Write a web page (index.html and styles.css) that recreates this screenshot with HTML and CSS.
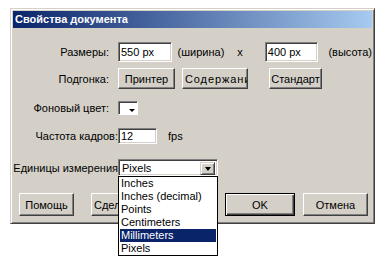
FILE: index.html
```html
<!DOCTYPE html>
<html>
	<head>
		<meta charset="UTF-8">
		<title>Свойства документа</title>
		<link rel="stylesheet" href="styles.css">
	</head>
	<body>
		<div class="dialog">
			<div class="caption">Свойства документа</div>

			<div class="row r-size">
				<div class="lbl">Размеры:</div>
				<div class="field w57">550 px</div>
				<span class="txt m6">(ширина)</span>
				<span class="txt m13">x</span>
				<div class="field w57 m22">400 px</div>
				<span class="txt m10">(высота)</span>
			</div>

			<div class="row r-fit">
				<div class="lbl">Подгонка:</div>
				<div class="btn w57">Принтер</div>
				<div class="btn clip w66 m7"><span class="spaced">Содержание</span></div>
				<div class="btn w53 m21">Стандарт</div>
			</div>

			<div class="row r-bg">
				<div class="lbl">Фоновый цвет:</div>
				<div class="swatch"><i></i></div>
			</div>

			<div class="row r-fps">
				<div class="lbl tight">Частота кадров:</div>
				<div class="field w39">12</div>
				<span class="txt m11">fps</span>
			</div>

			<div class="row r-units">
				<div class="lbl tight">Единицы измерения</div>
				<div class="combo">
					<div class="combo-val">Pixels</div>
					<div class="combo-arrow"><i></i></div>
				</div>
			</div>

			<div class="row r-buttons">
				<div class="btn w55 m6">Помощь</div>
				<div class="btn clip w70 m17"><span>Сделать по умолчанию</span></div>
				<div class="btn def w70 m64">OK</div>
				<div class="btn w65 m8">Отмена</div>
			</div>
		</div>

		<ul class="list">
			<li>Inches</li>
			<li>Inches (decimal)</li>
			<li>Points</li>
			<li>Centimeters</li>
			<li class="sel">Millimeters</li>
			<li>Pixels</li>
		</ul>
	</body>
</html>
```

FILE: styles.css
```css
*{
	margin: 0;
	padding: 0;
	box-sizing: border-box;
}
html, body{
	height: 100%;
}
body{
	position: relative;
	background: #fff;
	font-family: "Liberation Sans", Arial, sans-serif;
	font-size: 11px;
	color: #000;
}
.dialog{
	width: 365px;
	height: 216px;
	margin: 0 0 0 10px;
	position: relative;
	top: 8px;
	background: #d4d0c8;
	border: 1px solid;
	border-color: #d4d0c8 #404040 #404040 #d4d0c8;
	box-shadow: inset 1px 1px #fff, inset -1px -1px #808080;
	padding: 2px;
}
.caption{
	height: 17px;
	line-height: 17px;
	padding-left: 2px;
	font-weight: bold;
	color: #fff;
	background: linear-gradient(to right, #0a246a, #a6caf0);
}
.row{
	display: flex;
	align-items: center;
}
.r-size{ margin-top: 14px; height: 20px; }
.r-fit{ margin-top: 6px; height: 21px; }
.r-bg{ margin-top: 12px; height: 14px; }
.r-fps{ margin-top: 13px; height: 16px; }
.r-units{ margin-top: 15px; height: 17px; }
.r-buttons{ margin-top: 17px; height: 23px; }

.lbl{
	flex: none;
	width: 105px;
	display: flex;
	justify-content: flex-end;
	padding-right: 9px;
	white-space: nowrap;
}
.lbl.tight{
	padding-right: 0;
}
.txt{ white-space: nowrap; }

.field{
	height: 100%;
	background: #fff;
	border: 1px solid;
	border-color: #808080 #fff #fff #808080;
	box-shadow: inset 1px 1px #404040, inset -1px -1px #d4d0c8;
	padding: 0 2px;
	display: flex;
	align-items: center;
}
.btn{
	flex: none;
	height: 100%;
	background: #d4d0c8;
	border: 1px solid;
	border-color: #fff #404040 #404040 #fff;
	box-shadow: inset -1px -1px #808080, inset 1px 1px #d4d0c8;
	display: flex;
	align-items: center;
	justify-content: center;
	white-space: nowrap;
	overflow: hidden;
}
/* текст не влезает — обрезается справа */
.btn.clip{
	justify-content: flex-start;
	padding-left: 2px;
}
.btn.clip span{
	flex: none;
}
.spaced{
	letter-spacing: 0.9px;
}
.btn.def{
	border: 1px solid #000;
	box-shadow: inset 1px 1px #fff, inset -1px -1px #404040, inset -2px -2px #808080;
}

.w39{ width: 39px; }
.w53{ width: 53px; }
.w55{ width: 55px; }
.w57{ width: 57px; }
.w65{ width: 65px; }
.w66{ width: 66px; }
.w70{ width: 70px; }
.m6{ margin-left: 6px; }
.m7{ margin-left: 7px; }
.m8{ margin-left: 8px; }
.m10{ margin-left: 10px; }
.m11{ margin-left: 11px; }
.m13{ margin-left: 13px; }
.m17{ margin-left: 17px; }
.m21{ margin-left: 21px; }
.m22{ margin-left: 22px; }
.m64{ margin-left: 64px; }

.swatch{
	position: relative;
	width: 20px;
	height: 14px;
	background: #fff;
	border: 1px solid;
	border-color: #808080 #fff #fff #808080;
	box-shadow: inset 1px 1px #404040;
}
.swatch i{
	position: absolute;
	right: 2px;
	bottom: 2px;
	border-left: 3px solid transparent;
	border-right: 3px solid transparent;
	border-top: 3px solid #000;
}

.combo{
	width: 100px;
	height: 100%;
	background: #fff;
	border: 1px solid;
	border-color: #808080 #fff #fff #808080;
	box-shadow: inset 1px 1px #404040, inset -1px -1px #d4d0c8;
	display: flex;
	padding: 2px;
}
.combo-val{
	flex: 1;
	line-height: 13px;
	padding-left: 1px;
}
.combo-arrow{
	width: 15px;
	height: 13px;
	background: #d4d0c8;
	border: 1px solid;
	border-color: #d4d0c8 #404040 #404040 #d4d0c8;
	box-shadow: inset 1px 1px #fff, inset -1px -1px #808080;
	display: flex;
	align-items: center;
	justify-content: center;
}
.combo-arrow i{
	border-left: 3px solid transparent;
	border-right: 3px solid transparent;
	border-top: 4px solid #000;
}
/* раскрытый список единиц, лежит поверх диалога */
.list{
	position: absolute;
	z-index: 10;
	top: 176px;
	left: 118px;
	width: 100px;
	height: 80px;
	background: #fff;
	border: 1px solid #000;
	list-style: none;
	padding: 0 1px 1px;
}
.list li{
	height: 13px;
	line-height: 13px;
	padding-left: 1px;
	white-space: nowrap;
}
.list li.sel{
	background: #0a246a;
	color: #fff;
}
```
